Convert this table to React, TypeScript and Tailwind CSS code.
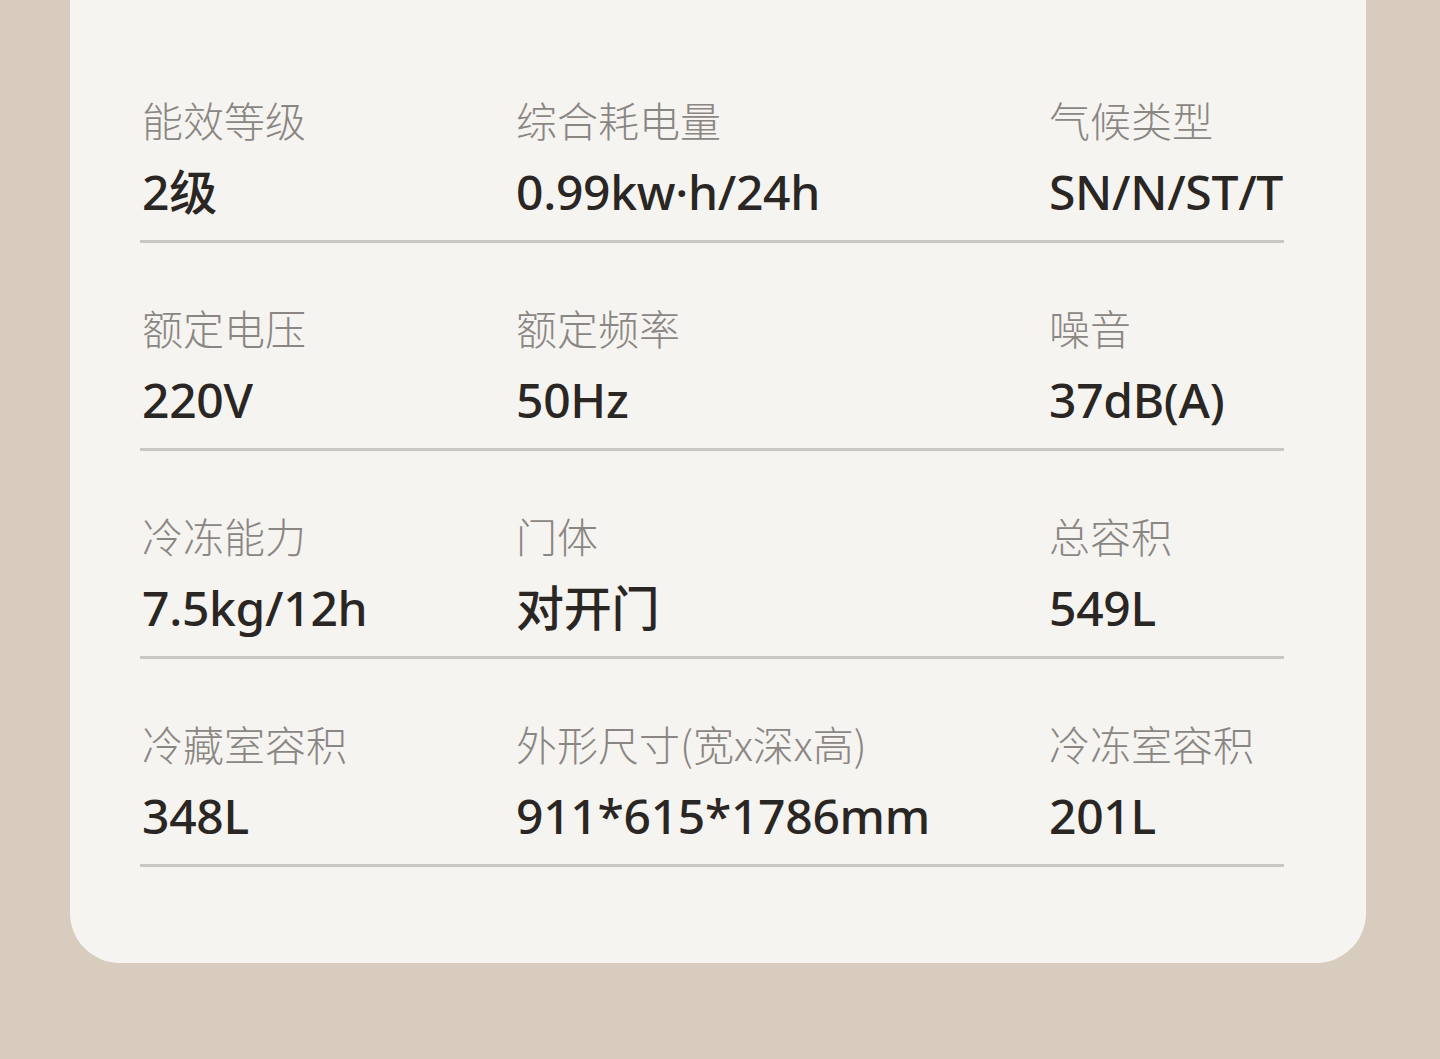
const specs = [
  [
    { label: "能效等级", value: "2级" },
    { label: "综合耗电量", value: "0.99kw·h/24h" },
    { label: "气候类型", value: "SN/N/ST/T" },
  ],
  [
    { label: "额定电压", value: "220V" },
    { label: "额定频率", value: "50Hz" },
    { label: "噪音", value: "37dB(A)" },
  ],
  [
    { label: "冷冻能力", value: "7.5kg/12h" },
    { label: "门体", value: "对开门" },
    { label: "总容积", value: "549L" },
  ],
  [
    { label: "冷藏室容积", value: "348L" },
    { label: "外形尺寸(宽x深x高)", value: "911*615*1786mm" },
    { label: "冷冻室容积", value: "201L" },
  ],
]

export default function App() {
  return (
    <div className="min-h-[1059px] w-full bg-[#d8ccbf] pb-[97px]">
      <div className="ml-[70px] mr-[74px] rounded-b-[50px] bg-[#f6f4f0] px-[70px] pr-[82px] pt-[35px] pb-[96px]">
        {specs.map((row, i) => (
          <div
            key={i}
            className="grid grid-cols-[374px_533px_1fr] border-b-[3px] border-[#cbc7c2] pt-[59px] pb-[18px]"
          >
            {row.map((cell) => (
              <div key={cell.label} className="pl-[2px]">
                <div className="font-['Noto_Sans_CJK_SC',sans-serif] text-[41px] font-light leading-[50px] text-[#8a8683]">
                  {cell.label}
                </div>
                <div className="mt-[18px] whitespace-nowrap font-['Noto_Sans','Noto_Sans_CJK_SC',sans-serif] text-[48px] font-medium leading-[60px] tracking-[-0.3px] text-[#2a2623]">
                  {cell.value}
                </div>
              </div>
            ))}
          </div>
        ))}
      </div>
    </div>
  )
}
